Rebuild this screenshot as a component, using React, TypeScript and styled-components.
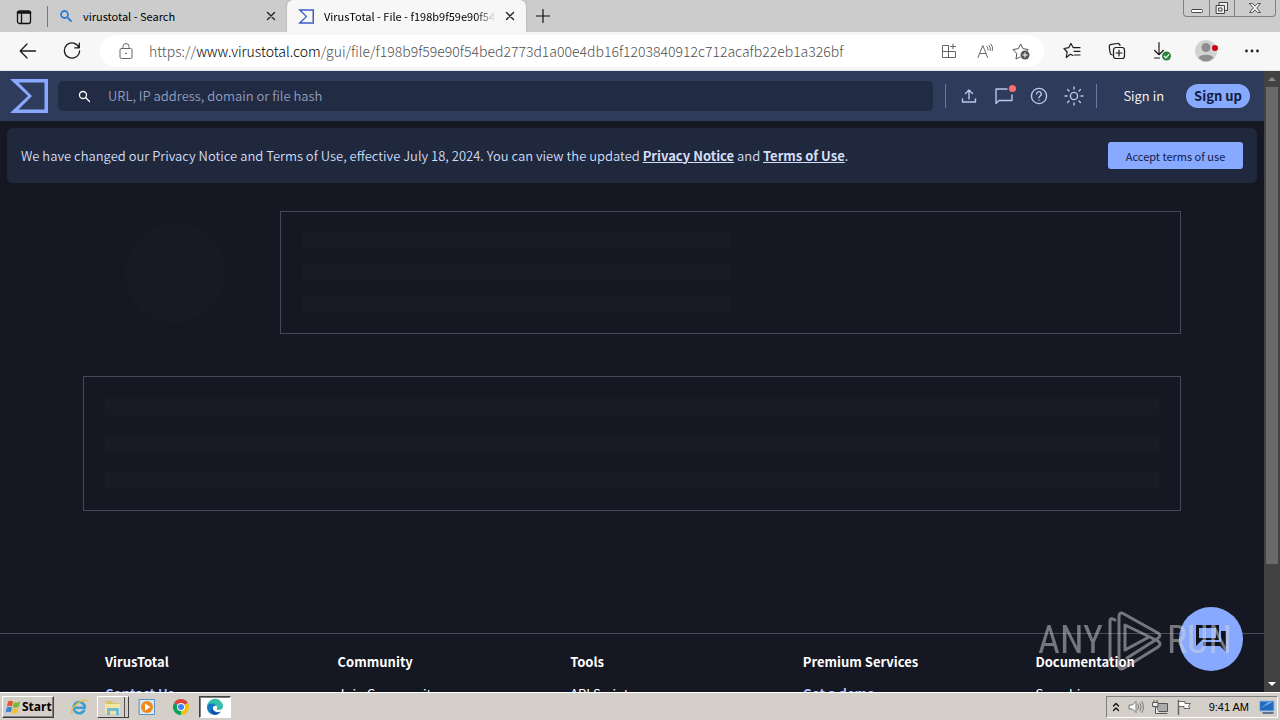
import React from "react";
import styled, { createGlobalStyle, css } from "styled-components";

const GlobalStyle = createGlobalStyle`
  * { box-sizing: border-box; }
  html, body { margin: 0; height: 100%; }
  body { font-family: "Noto Sans CJK SC", "Noto Sans", sans-serif; overflow: hidden; }
  button, input { font: inherit; color: inherit; }
  button { border: 0; padding: 0; background: none; cursor: pointer; }
  svg { display: block; flex: none; }
`;

const Desktop = styled.div`
  display: flex;
  flex-direction: column;
  height: 100vh;
  background: #151723;
`;

/* ---------- browser chrome ---------- */

const TabStrip = styled.div`
  display: flex;
  flex: none;
  height: 32px;
  background: #cccccc;
`;

const TabMenu = styled.button`
  width: 48px;
  display: grid;
  place-items: center;
  margin: 6px 0 5px;
  border-right: 1px solid #707884;
`;

const Tab = styled.div<{ $active?: boolean; $width: number }>`
  display: flex;
  align-items: center;
  gap: 10px;
  width: ${(p) => p.$width}px;
  padding: 0 8px 0 11px;
  border-radius: 6px 6px 0 0;
  background: ${(p) => (p.$active ? "#f7f7f7" : "transparent")};
  box-shadow: ${(p) => (p.$active ? "0 0 2px #9b9b9b" : "none")};
`;

const TabTitle = styled.span<{ $fade?: boolean }>`
  flex: 1;
  min-width: 0;
  overflow: hidden;
  white-space: nowrap;
  font-size: 11px;
  line-height: 20px;
  color: #000;
  ${(p) =>
    p.$fade &&
    css`
      margin-right: -4px;
      mask-image: linear-gradient(90deg, #000 88%, transparent);
    `}
`;

const TabClose = styled.button`
  width: 16px;
  height: 16px;
  display: grid;
  place-items: center;
`;

const NewTab = styled.button`
  width: 34px;
  display: grid;
  place-items: center;
`;

const WindowControls = styled.div`
  display: flex;
  margin-left: auto;
  margin-right: 4px;
  height: 17px;
  border: 1px solid #808080;
  border-top: 0;
  border-radius: 0 0 4px 4px;
`;

const WindowButton = styled.button<{ $wide?: boolean }>`
  width: ${(p) => (p.$wide ? 41 : 25)}px;
  display: grid;
  place-items: center;
  & + & { border-left: 1px solid #808080; }
`;

const Toolbar = styled.div`
  display: flex;
  align-items: center;
  flex: none;
  height: 39px;
  padding: 0 6px;
  background: #f7f7f7;
  border-bottom: 1px solid #dfe3ea;
`;

const ToolButton = styled.button<{ $width?: number }>`
  display: grid;
  place-items: center;
  width: ${(p) => p.$width ?? 45}px;
  height: 32px;
  color: #1b1b1b;
`;

const AddressBar = styled.div`
  display: flex;
  align-items: center;
  flex: 1;
  min-width: 0;
  height: 32px;
  margin: 0 5px 0 6px;
  padding: 0 5px 0 10px;
  border-radius: 16px;
  background: #fff;
`;

const Url = styled.div`
  flex: 1;
  min-width: 0;
  margin-left: 7px;
  overflow: hidden;
  white-space: nowrap;
  font-size: 14px;
  font-weight: 300;
  line-height: 20px;
  color: #505050;
  outline: 0;
`;

const UrlHost = styled.span`
  color: #000;
`;

/* ---------- page ---------- */

const Viewport = styled.div`
  display: flex;
  flex: 1;
  min-height: 0;
`;

const Page = styled.div`
  position: relative;
  display: flex;
  flex-direction: column;
  flex: 1;
  min-width: 0;
  overflow: hidden;
  background: #151723;
`;

const Header = styled.header`
  display: flex;
  align-items: center;
  flex: none;
  height: 50px;
  padding: 0 14px 0 10px;
  background: #2f3b5b;
`;

const LogoLink = styled.a`
  display: block;
  margin-right: 10px;
`;

const SearchBox = styled.label`
  display: flex;
  align-items: center;
  flex: 1;
  min-width: 0;
  gap: 15px;
  height: 30px;
  margin-right: 7px;
  padding: 0 20px;
  border-radius: 5px;
  background: #222b44;
`;

const SearchInput = styled.input`
  flex: 1;
  min-width: 0;
  border: 0;
  outline: 0;
  background: none;
  font-size: 13px;
  font-weight: 350;
  line-height: 20px;
  &::placeholder { color: #939dbc; opacity: 1; }
`;

const Divider = styled.span`
  flex: none;
  width: 1px;
  height: 24px;
  margin: 0 5px;
  background: #6b7ba6;
`;

const HeaderIcon = styled.button`
  display: grid;
  place-items: center;
  width: 35px;
  height: 30px;
  color: #b9c7ea;
`;

const SignIn = styled.a`
  margin: 0 22px 0 21px;
  font-size: 13px;
  font-weight: 350;
  line-height: 20px;
  color: #fff;
  text-decoration: none;
`;

const SignUp = styled.a`
  width: 64px;
  border-radius: 12px;
  background: #87a9ff;
  font-size: 13px;
  font-weight: 700;
  line-height: 24px;
  text-align: center;
  color: #131b3c;
  text-decoration: none;
`;

const Notice = styled.section`
  display: flex;
  align-items: center;
  justify-content: space-between;
  flex: none;
  height: 55px;
  margin: 7px 7px 0;
  padding: 0 14px;
  border-radius: 6px;
  background: #20283d;
  font-size: 13px;
  font-weight: 350;
  line-height: 20px;
  color: #d3dff8;
`;

const NoticeText = styled.p`
  margin: 0;
  a { color: inherit; font-weight: 700; }
`;

const Accept = styled.button`
  width: 135px;
  height: 27px;
  border-radius: 3px;
  background: #87a9ff;
  font-size: 11px;
  font-weight: 400;
  color: #16204a;
`;

const Content = styled.main`
  display: flex;
  flex-direction: column;
  flex: none;
  gap: 42px;
  padding: 28px 83px 122px;
`;

const Summary = styled.div`
  display: flex;
`;

const ScoreArea = styled.div`
  display: grid;
  place-items: center;
  width: 197px;
  padding-right: 14px;
`;

const ScoreSkeleton = styled.div`
  width: 100px;
  height: 100px;
  border-radius: 50%;
  background: #171924;
`;

const Card = styled.div<{ $gap: number; $pad: number }>`
  display: flex;
  flex-direction: column;
  flex: 1;
  gap: ${(p) => p.$gap}px;
  padding: ${(p) => p.$pad}px 21px;
  border: 1px solid #464858;
`;

const Bar = styled.div<{ $half?: boolean }>`
  width: ${(p) => (p.$half ? "50%" : "100%")};
  height: 17px;
  background: #181a26;
`;

const Footer = styled.footer`
  display: grid;
  grid-template-columns: repeat(5, 1fr);
  flex: none;
  gap: 24px;
  padding: 18px 20px 0 105px;
  border-top: 1px solid #484a5a;
`;

const FooterColumn = styled.nav`
  display: flex;
  flex-direction: column;
  gap: 12px;
  font-size: 13px;
  line-height: 20px;
  color: #fff;
`;

const FooterTitle = styled.h4`
  margin: 0;
  font-size: 13px;
  font-weight: 700;
`;

const FooterLink = styled.a<{ $accent?: boolean }>`
  color: ${(p) => (p.$accent ? "#a9bcff" : "#fff")};
  font-weight: ${(p) => (p.$accent ? 700 : 400)};
  text-decoration: none;
`;

const ChatButton = styled.button`
  position: absolute;
  right: 21px;
  bottom: 21px;
  display: grid;
  place-items: center;
  width: 64px;
  height: 64px;
  border-radius: 50%;
  background: #87a9ff;
`;

const Watermark = styled.div`
  position: absolute;
  right: 32px;
  bottom: 20px;
  display: flex;
  align-items: center;
  gap: 4px;
  height: 64px;
  opacity: 0.5;
  color: #d5d5d8;
  font-family: "Liberation Sans Narrow", "Roboto Condensed", "DejaVu Sans Condensed", sans-serif;
  font-size: 38px;
  line-height: 64px;
  pointer-events: none;
`;

const Scrollbar = styled.div`
  display: flex;
  flex-direction: column;
  align-items: center;
  flex: none;
  width: 16px;
  background: #424242;
`;

const ScrollArrow = styled.button`
  display: grid;
  place-items: center;
  width: 16px;
  height: 16px;
`;

const ScrollTrack = styled.div`
  flex: 1;
  width: 12px;
`;

const ScrollThumb = styled.div`
  height: 81%;
  background: #6a6a6a;
`;

/* ---------- taskbar ---------- */

const Taskbar = styled.div`
  display: flex;
  align-items: center;
  flex: none;
  height: 28px;
  padding: 0 2px;
  border-top: 1px solid #fff;
  background: #d4cfc8;
`;

const StartButton = styled.button`
  display: flex;
  align-items: center;
  gap: 1px;
  width: 52px;
  height: 22px;
  margin-right: 9px;
  padding: 0 2px;
  border: 1px solid;
  border-color: #fff #404040 #404040 #fff;
  box-shadow: inset -1px -1px #808080;
  font-family: "Open Sans", "DejaVu Sans Condensed", sans-serif;
  font-size: 12px;
  font-weight: 700;
  color: #000;
`;

const TaskButton = styled.button<{ $state?: "raised" | "pressed" }>`
  display: grid;
  place-items: center;
  width: 32px;
  height: 22px;
  margin-right: 2px;
  border: 1px solid transparent;
  ${(p) =>
    p.$state === "raised" &&
    css`
      border-color: #fff #404040 #404040 #fff;
      box-shadow: inset -3px 0 #d4cfc8, inset -4px 0 #505050;
    `}
  ${(p) =>
    p.$state === "pressed" &&
    css`
      border-color: #404040 #fff #fff #404040;
      box-shadow: inset 1px 1px #808080;
      background: #fff;
    `}
`;

const Tray = styled.div`
  display: flex;
  align-items: center;
  height: 22px;
  margin-left: auto;
  padding: 0 2px 0 5px;
  gap: 8px;
  border: 1px solid;
  border-color: #808080 #fff #fff #808080;
`;

const Clock = styled.time`
  margin: 0 2px 0 9px;
  font-family: "Liberation Sans", sans-serif;
  font-size: 11px;
  line-height: 16px;
  color: #000;
`;

/* ---------- icons ---------- */

type IconProps = {
  size?: number;
  width?: number;
  stroke?: number;
  color?: string;
  children: React.ReactNode;
};

const Icon = ({ size = 20, width, stroke = 1, color = "currentColor", children }: IconProps) => (
  <svg
    width={width ?? size}
    height={size}
    viewBox={`0 0 ${width ?? size} ${size}`}
    fill="none"
    stroke={color}
    strokeWidth={stroke}
    strokeLinecap="round"
    strokeLinejoin="round"
    aria-hidden="true"
  >
    {children}
  </svg>
);

const Sigma = ({ width, height, color }: { width: number; height: number; color: string }) => (
  <svg width={width} height={height} viewBox="0 0 38 34" aria-hidden="true">
    <path fill={color} fillRule="evenodd" d="M0 0H38V34H0L18 17ZM8.500 3.500L22 17L8.500 30.500H34.500V3.500Z" />
  </svg>
);

const CloseIcon = () => (
  <Icon size={10} stroke={1.4} color="#222">
    <path d="M1.500 1.500l7 7M8.500 1.500l-7 7" />
  </Icon>
);

const footerColumns = [
  { title: "VirusTotal", link: "Contact Us", accent: true },
  { title: "Community", link: "Join Community" },
  { title: "Tools", link: "API Scripts" },
  { title: "Premium Services", link: "Get a demo", accent: true },
  { title: "Documentation", link: "Searching" },
];

function BrowserTabs() {
  return (
    <TabStrip>
      <TabMenu aria-label="Tab actions">
        <Icon size={16} stroke={1.3} color="#111">
          <rect x="1.500" y="2" width="13" height="12.500" rx="2" />
          <path d="M2 3.500h12" strokeWidth="2.500" />
          <path d="M5.500 5v9" />
        </Icon>
      </TabMenu>
      <Tab $width={239}>
        <Icon size={14} stroke={1.8} color="#2b7fd0">
          <circle cx="5.500" cy="5.500" r="3.500" />
          <path d="M8.300 8.300l3.700 3.700" />
        </Icon>
        <TabTitle>virustotal - Search</TabTitle>
        <TabClose aria-label="Close tab"><CloseIcon /></TabClose>
      </Tab>
      <Tab $active $width={239}>
        <Sigma width={16} height={15} color="#3d5bc9" />
        <TabTitle $fade>VirusTotal - File - f198b9f59e90f54bed2773</TabTitle>
        <TabClose aria-label="Close tab"><CloseIcon /></TabClose>
      </Tab>
      <NewTab aria-label="New tab">
        <Icon size={14} stroke={1.2} color="#111"><path d="M7 .5v13M.5 7h13" /></Icon>
      </NewTab>
      <WindowControls>
        <WindowButton aria-label="Minimize">
          <Icon size={14} color="#444"><rect x="1.500" y="8.500" width="11" height="3" rx="1" fill="#fff" /></Icon>
        </WindowButton>
        <WindowButton aria-label="Restore">
          <Icon size={14} color="#444">
            <rect x="4.500" y="1.500" width="8" height="8" fill="#eee" />
            <rect x="1.500" y="4.500" width="8" height="8" fill="#eee" />
            <rect x="4" y="7" width="3" height="3" />
          </Icon>
        </WindowButton>
        <WindowButton $wide aria-label="Close">
          <Icon size={14} color="#555">
            <path fill="#eee" d="M1.500 2.500h3L7 5l2.500-2.500h3L8.800 7l3.700 4.500h-3L7 9l-2.500 2.500h-3L5.200 7z" />
          </Icon>
        </WindowButton>
      </WindowControls>
    </TabStrip>
  );
}

function BrowserToolbar() {
  return (
    <Toolbar>
      <ToolButton $width={44} aria-label="Back">
        <Icon size={18} stroke={1.3}><path d="M16.500 9H1.500M8 2L1.200 9l6.800 7" /></Icon>
      </ToolButton>
      <ToolButton $width={44} aria-label="Refresh">
        <Icon size={18} stroke={1.3}><path d="M16 5.500A7.600 7.600 0 1 0 16.600 9M16.300 1.200v4.600h-4.600" /></Icon>
      </ToolButton>
      <AddressBar>
        <ToolButton $width={32} aria-label="Site information">
          <Icon size={18} color="#666">
            <rect x="3" y="6.500" width="12" height="10" rx="1.500" />
            <path d="M6 6.500V4.500a3 3 0 0 1 6 0v2" />
            <circle cx="9" cy="11.500" r=".5" fill="#666" />
          </Icon>
        </ToolButton>
        <Url role="textbox" aria-label="Address" contentEditable suppressContentEditableWarning spellCheck={false}>
          https://<UrlHost>www.virustotal.com</UrlHost>/gui/file/f198b9f59e90f54bed2773d1a00e4db16f1203840912c712acafb22eb1a326bf
        </Url>
        <ToolButton $width={36} aria-label="Apps">
          <Icon size={16} color="#666">
            <path d="M7.500 2.500H1.500V14.500H14.500V8.500H1.500M7.500 2.500V14.500M12 1v5M9.500 3.500h5" />
          </Icon>
        </ToolButton>
        <ToolButton $width={36} aria-label="Read aloud">
          <Icon size={16} color="#666">
            <path d="M1 14.500L5.800 2.500l4.800 12M2.700 10.500h6.200M10 3.500q1.500 1.500 1 3.500M12 2.500q2 2 1.300 5M14 1q2.500 3 1.400 6.500" />
          </Icon>
        </ToolButton>
        <ToolButton $width={36} aria-label="Add to favorites">
          <Icon size={18} color="#555">
            <path d="M8 15l-4 2 .8-5.500L1 7.500l5.300-.8L8.700 2l2.300 4.700 5.200.8-1.400 1.500" />
            <circle cx="13" cy="13" r="4.500" fill="#555" stroke="none" />
            <path stroke="#fff" d="M13 10.800v4.400M10.800 13h4.400" />
          </Icon>
        </ToolButton>
      </AddressBar>
      <ToolButton aria-label="Favorites">
        <Icon size={18} stroke={1.2}>
          <path d="M10 13.500L7.500 12.300 3.200 15.500l1-5.500L1 6.500l4.700-.8L7.900 1.500l2.400 4.200h6.700M11 9.300h6M11.500 13h5.500" />
        </Icon>
      </ToolButton>
      <ToolButton aria-label="Collections">
        <Icon size={18} stroke={1.2}>
          <path d="M4.200 13A3 3 0 0 1 2 10.500L1.300 5A2.300 2.300 0 0 1 3.300 2.300L9.500 1.500A2.200 2.200 0 0 1 12 3.500" />
          <rect x="5.500" y="5.500" width="11" height="11" rx="2.500" />
          <path d="M11 8v6M8 11h6" />
        </Icon>
      </ToolButton>
      <ToolButton aria-label="Downloads">
        <Icon size={20} stroke={1.2}>
          <path d="M7 1.500v12M2.500 9.300L7 13.700l4.500-4.400M2.500 17h5" />
          <circle cx="14.500" cy="15" r="4.500" fill="#2e8540" stroke="none" />
          <path stroke="#fff" d="M12.300 15.200l1.600 1.600 2.900-3.100" />
        </Icon>
      </ToolButton>
      <ToolButton aria-label="Profile">
        <Icon size={24} stroke={0}>
          <circle cx="11" cy="12" r="11" fill="#d3d3d3" />
          <circle cx="11" cy="8.500" r="4.500" fill="#8d8d8d" />
          <path d="M3.500 19C5 14.500 17 14.500 18.500 19Q11 26 3.500 19Z" fill="#8d8d8d" />
          <circle cx="20" cy="9" r="3" fill="#d40012" />
        </Icon>
      </ToolButton>
      <ToolButton aria-label="Settings and more">
        <Icon size={16} stroke={0}>
          <circle cx="2.500" cy="8" r="1.400" fill="#222" />
          <circle cx="8" cy="8" r="1.400" fill="#222" />
          <circle cx="13.500" cy="8" r="1.400" fill="#222" />
        </Icon>
      </ToolButton>
    </Toolbar>
  );
}

function SiteHeader() {
  return (
    <Header>
      <LogoLink href="#" aria-label="VirusTotal home">
        <Sigma width={38} height={34} color="#87a9ff" />
      </LogoLink>
      <SearchBox>
        <Icon size={13} stroke={1.3} color="#fff">
          <circle cx="5" cy="5" r="3.500" />
          <path d="M7.800 7.800l3.700 3.700" />
        </Icon>
        <SearchInput aria-label="Search" placeholder="URL, IP address, domain or file hash" />
      </SearchBox>
      <Divider />
      <HeaderIcon aria-label="Upload">
        <Icon size={16} stroke={1.4}><path d="M8 11V2.500M4.500 5.500L8 2l3.500 3.500M1.500 11v3h13v-3" /></Icon>
      </HeaderIcon>
      <HeaderIcon aria-label="Comments">
        <Icon size={24} stroke={1.4}>
          <path d="M15 5H4V19.500L7 16.500H20V11" />
          <circle cx="20.500" cy="4.500" r="3.600" fill="#ff6b6e" stroke="none" />
        </Icon>
      </HeaderIcon>
      <HeaderIcon aria-label="Help">
        <Icon size={18} stroke={1.4}>
          <circle cx="9" cy="9" r="7.600" />
          <path d="M6.700 7A2.300 2.300 0 1 1 10 9Q9 9.600 9 10.800M9 13.200v.1" />
        </Icon>
      </HeaderIcon>
      <HeaderIcon aria-label="Theme">
        <Icon size={20} stroke={1.4}>
          <circle cx="10" cy="10" r="3.600" />
          <path d="M10 1v2M10 17v2M1 10h2M17 10h2M3.600 3.600L5 5M15 15l1.400 1.400M3.600 16.400L5 15M15 5l1.400-1.400" />
        </Icon>
      </HeaderIcon>
      <Divider />
      <SignIn href="#">Sign in</SignIn>
      <SignUp href="#">Sign up</SignUp>
    </Header>
  );
}

function WindowsTaskbar() {
  return (
    <Taskbar>
      <StartButton>
        <Icon size={16} stroke={0}>
          <path fill="#e2582b" d="M3 2.500Q5.500 1 8 2.500L7 7.500Q4.500 6 2 7.500Z" />
          <path fill="#76b63c" d="M9 3Q11.500 4.500 15 2.500L14 7.500Q11 9.500 8 8Z" />
          <path fill="#3c84cf" d="M1.700 8.500Q4.500 7 7 8.500L6 13.500Q3.500 12 .7 13.500Z" />
          <path fill="#f3bd2c" d="M8 9Q10.500 10.500 13.700 8.800L12.500 13.500Q10 15.500 7 14Z" />
        </Icon>
        Start
      </StartButton>
      <TaskButton aria-label="Internet Explorer">
        <Icon size={18} stroke={0}>
          <path d="M14 12.500A5.600 5.600 0 1 1 14.800 9.800H4.500" stroke="#3a9ed8" strokeWidth="2.600" />
          <path d="M2 15.500C-1 11 11 1 16.500 2.500" stroke="#e9bd35" strokeWidth="1.500" />
        </Icon>
      </TaskButton>
      <TaskButton $state="raised" aria-label="Explorer">
        <Icon size={18} stroke={0}>
          <path d="M2 3h6l1.500 2H15v11H2z" fill="#dcc365" />
          <path d="M1 6h15v10H1z" fill="#f2e6a2" />
          <path d="M3 10h12v7h-3v-4H6v4H3z" fill="#72b9d3" />
        </Icon>
      </TaskButton>
      <TaskButton aria-label="Media Player">
        <Icon size={18} stroke={0}>
          <rect x="1.500" y="1.500" width="15" height="15" fill="#d9e8f4" stroke="#5596c8" strokeWidth="1" />
          <circle cx="9" cy="9" r="6" fill="#f18a1e" />
          <path d="M7 5.500l5.500 3.500L7 12.500z" fill="#fff" />
        </Icon>
      </TaskButton>
      <TaskButton aria-label="Chrome">
        <Icon size={18} stroke={0}>
          <path d="M9 9L2.070 5A8 8 0 0 1 15.930 5Z" fill="#db4437" />
          <path d="M9 9L15.930 5A8 8 0 0 1 9 17Z" fill="#f4c20d" />
          <path d="M9 9L9 17A8 8 0 0 1 2.070 5Z" fill="#0f9d58" />
          <circle cx="9" cy="9" r="4" fill="#fff" />
          <circle cx="9" cy="9" r="3" fill="#4285f4" />
        </Icon>
      </TaskButton>
      <TaskButton $state="pressed" aria-label="Edge">
        <Icon size={18} stroke={0}>
          <path d="M1 9A8 8 0 0 1 17 8.500C17 12 13 12.500 10.500 11.500 12.500 8 9 6 6.500 6 3.500 6 1.500 7.500 1 9Z" fill="#35bfa8" />
          <path d="M1 9C1.500 5 8 4.500 10.500 7.500 5 7.500 5.500 14 13.500 14.500 9 19.500 1 16 1 9Z" fill="#1677c7" />
          <path d="M6.500 10C6 14 10 15.500 14.800 13.500 11 19 5.500 16.500 5 13Z" fill="#0b4f9c" />
        </Icon>
      </TaskButton>
      <Tray>
        <Icon size={12} width={8} stroke={1.4} color="#111"><path d="M1.500 5L4 2.500 6.500 5M1.500 9.500L4 7l2.500 2.500" /></Icon>
        <Icon size={16} color="#777">
          <path d="M1.500 6h3L8 2.500v11L4.500 10h-3z" fill="#fff" />
          <path d="M10 5.500q1.500 2.500 0 5M12 4q2.500 4 0 8M14 2.500q3 5.500 0 11" />
        </Icon>
        <Icon size={16} color="#555">
          <rect x="5.500" y="4.500" width="10" height="8" fill="#aaa" />
          <path d="M1 3.500h5v4H1zM2 3.500v-2M5 3.500v-2M3.500 7.500v7h4M8 14.500h7" fill="#eee" />
        </Icon>
        <Icon size={16} color="#666">
          <path d="M2.500 1.500v14" strokeWidth="1.500" />
          <path d="M3 2.500h6v2h5.500l-2 2.500 1.500 2.500H8v-2H3z" fill="#fff" />
        </Icon>
        <Clock>9:41 AM</Clock>
        <Icon size={16} stroke={0}>
          <rect x="1" y="2" width="14" height="10" fill="#2369bd" stroke="#8bbce8" strokeWidth="1" />
          <path d="M2 9l7-6h5z" fill="#67a9e8" />
          <path d="M4 14h10" stroke="#3c5878" strokeWidth="1.500" />
        </Icon>
      </Tray>
    </Taskbar>
  );
}

export default function App() {
  return (
    <Desktop>
      <GlobalStyle />
      <BrowserTabs />
      <BrowserToolbar />
      <Viewport>
        <Page>
          <SiteHeader />
          <Notice>
            <NoticeText>
              We have changed our Privacy Notice and Terms of Use, effective July 18, 2024. You can view the updated{" "}
              <a href="#">Privacy Notice</a> and <a href="#">Terms of Use</a>.
            </NoticeText>
            <Accept>Accept terms of use</Accept>
          </Notice>
          <Content>
            <Summary>
              <ScoreArea><ScoreSkeleton /></ScoreArea>
              <Card $gap={15} $pad={20}>
                <Bar $half />
                <Bar $half />
                <Bar $half />
              </Card>
            </Summary>
            <Card $gap={20} $pad={21}>
              <Bar />
              <Bar />
              <Bar />
            </Card>
          </Content>
          <Footer>
            {footerColumns.map((c) => (
              <FooterColumn key={c.title} aria-label={c.title}>
                <FooterTitle>{c.title}</FooterTitle>
                <FooterLink href="#" $accent={c.accent}>{c.link}</FooterLink>
              </FooterColumn>
            ))}
          </Footer>
          <ChatButton aria-label="Open chat">
            <Icon size={32} stroke={0}>
              <path fill="#10141f" fillRule="evenodd" d="M1 2H24V17H7L1 23ZM4 5V15H21V5Z" />
              <path fill="#10141f" d="M26 8H31V29L25 23H8V19H26Z" />
            </Icon>
          </ChatButton>
          <Watermark>
            <span>ANY</span>
            <Icon width={56} size={64} stroke={3}>
              <path d="M3 52V13Q3 9 8 12" />
              <path d="M12 44V9Q12 3 17 6L51 25Q55 28 50 31L20 50M12 44V57Q12 63 17 60L51 39Q55 36 51 33L18 17V42L42 29" />
            </Icon>
            <span>RUN</span>
          </Watermark>
        </Page>
        <Scrollbar>
          <ScrollArrow aria-label="Scroll up">
            <Icon size={8} stroke={0}><path d="M0 6l4-4 4 4z" fill="#8b8b8b" /></Icon>
          </ScrollArrow>
          <ScrollTrack><ScrollThumb /></ScrollTrack>
          <ScrollArrow aria-label="Scroll down">
            <Icon size={8} stroke={0}><path d="M0 2l4 4 4-4z" fill="#fff" /></Icon>
          </ScrollArrow>
        </Scrollbar>
      </Viewport>
      <WindowsTaskbar />
    </Desktop>
  );
}
